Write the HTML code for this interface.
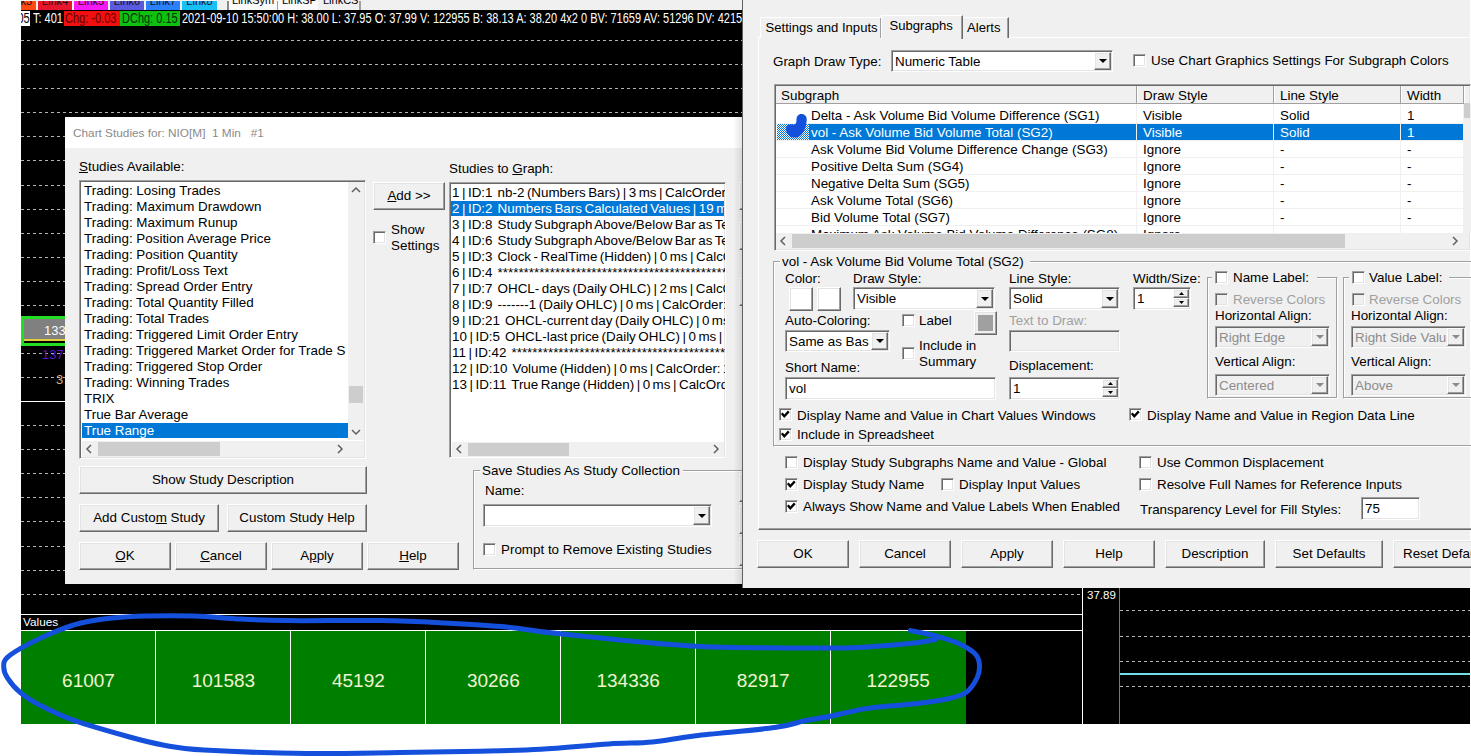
<!DOCTYPE html><html><head><meta charset="utf-8"><style>
html,body{margin:0;padding:0;width:1471px;height:756px;overflow:hidden;background:#fff;position:relative}
.t{position:absolute;white-space:pre;line-height:1;font-family:"Liberation Sans",sans-serif}
.r{position:absolute}
.sk{position:absolute;border:1px solid;border-color:#a0a0a0 #fff #fff #a0a0a0;box-shadow:inset 1px 1px 0 #696969,inset -1px -1px 0 #e3e3e3}
.bt{position:absolute;background:#f0f0f0;border:1px solid;border-color:#fff #696969 #696969 #fff;box-shadow:inset -1px -1px 0 #a0a0a0,inset 1px 1px 0 #e3e3e3}
.gb{position:absolute;border:1px solid;border-color:#a0a0a0 #fff #fff #a0a0a0;box-shadow:inset -1px -1px 0 #a0a0a0,inset 1px 1px 0 #fff}
.dash{position:absolute;height:1px;background:repeating-linear-gradient(90deg,#b4b4b4 0 3px,transparent 3px 6px)}
</style></head><body>

<div class="r" style="left:21px;top:10px;width:1449px;height:714px;background:#000;"></div>
<div class="r" style="left:21px;top:0px;width:721px;height:10px;background:#f0f0f0;"></div>
<div style="position:absolute;left:21px;top:0;width:721px;height:10px;overflow:hidden">
<div class="r" style="left:-19px;top:1px;width:34px;height:9px;background:#ff4a10;overflow:hidden"><div class="t" style="left:0;top:-5.3px;width:34px;text-align:center;font-size:11px;color:#201010">Link3</div></div>
<div class="r" style="left:17px;top:1px;width:34px;height:9px;background:#e8162c;overflow:hidden"><div class="t" style="left:0;top:-5.3px;width:34px;text-align:center;font-size:11px;color:#201010">Link4</div></div>
<div class="r" style="left:53px;top:1px;width:34px;height:9px;background:#f51af5;overflow:hidden"><div class="t" style="left:0;top:-5.3px;width:34px;text-align:center;font-size:11px;color:#201010">Link5</div></div>
<div class="r" style="left:89px;top:1px;width:34px;height:9px;background:#5a5ae0;overflow:hidden"><div class="t" style="left:0;top:-5.3px;width:34px;text-align:center;font-size:11px;color:#201010">Link6</div></div>
<div class="r" style="left:125px;top:1px;width:34px;height:9px;background:#2a80ff;overflow:hidden"><div class="t" style="left:0;top:-5.3px;width:34px;text-align:center;font-size:11px;color:#201010">Link7</div></div>
<div class="r" style="left:161px;top:1px;width:35px;height:9px;background:#18c0f5;overflow:hidden"><div class="t" style="left:0;top:-5.3px;width:35px;text-align:center;font-size:11px;color:#201010">Link8</div></div>
<div class="r" style="left:207px;top:0px;width:50px;height:10px;background:#fafafa"></div>
<div class="r" style="left:257px;top:0px;width:40px;height:10px;background:#fafafa"></div>
<div class="r" style="left:206px;top:1px;width:2px;height:9px;background:#8a8a8a"></div>
<div class="r" style="left:256px;top:1px;width:1px;height:9px;background:#a0a0a0"></div>
<div class="r" style="left:338px;top:1px;width:2px;height:9px;background:#a0a0a0"></div>
<div class="t" style="left:211px;top:-5.3px;font-size:11px;color:#000">LinkSym</div>
<div class="t" style="left:261px;top:-5.3px;font-size:11px;color:#000">LinkSP</div>
<div class="t" style="left:302px;top:-5.3px;font-size:11px;color:#000">LinkCS</div>
</div>
<div class="r" style="left:21px;top:11px;width:9px;height:15px;background:#fff;"></div>
<div class="r" style="left:64px;top:11px;width:56px;height:15px;background:#f01010;"></div>
<div class="r" style="left:120px;top:11px;width:60px;height:15px;background:#10c010;"></div>
<div style="position:absolute;left:21px;top:11px;width:9px;height:15px;overflow:hidden"><div class="t" style="left:-3.5px;top:1.5px;font-size:11px;transform:scaleY(1.28);transform-origin:0 50%;color:#000">05</div></div>
<div class="t" style="left:33px;top:12.5px;font-size:11px;transform:scaleY(1.28);transform-origin:0 50%;color:#fff">T: 401</div>
<div class="t" style="left:65px;top:12.5px;font-size:11px;transform:scaleY(1.28);transform-origin:0 50%;color:#600">Chg: -0.03</div>
<div class="t" style="left:122px;top:12.5px;font-size:11px;transform:scaleY(1.28);transform-origin:0 50%;color:#030">DChg: 0.15</div>
<div class="t" style="left:182px;top:12.5px;font-size:11px;transform:scaleY(1.28);transform-origin:0 50%;color:#fff">2021-09-10 15:50:00 H: 38.00 L: 37.95 O: 37.99 V: 122955 B: 38.13 A: 38.20 4x2 0 BV: 71659 AV: 51296 DV: 4215</div>
<div class="dash" style="left:21px;top:40px;width:1062px"></div>
<div class="dash" style="left:21px;top:64px;width:1062px"></div>
<div class="dash" style="left:21px;top:88px;width:1062px"></div>
<div class="dash" style="left:21px;top:112px;width:1062px"></div>
<div class="dash" style="left:21px;top:136px;width:1062px"></div>
<div class="dash" style="left:21px;top:160px;width:1062px"></div>
<div class="dash" style="left:21px;top:185px;width:1062px"></div>
<div class="dash" style="left:21px;top:209px;width:1062px"></div>
<div class="dash" style="left:21px;top:233px;width:1062px"></div>
<div class="dash" style="left:21px;top:257px;width:1062px"></div>
<div class="dash" style="left:21px;top:281px;width:1062px"></div>
<div class="dash" style="left:21px;top:305px;width:1062px"></div>
<div class="dash" style="left:21px;top:353px;width:1062px"></div>
<div class="dash" style="left:21px;top:377px;width:1062px"></div>
<div class="dash" style="left:21px;top:425px;width:1062px"></div>
<div class="dash" style="left:21px;top:449px;width:1062px"></div>
<div class="dash" style="left:21px;top:473px;width:1062px"></div>
<div class="dash" style="left:21px;top:497px;width:1062px"></div>
<div class="dash" style="left:21px;top:521px;width:1062px"></div>
<div class="dash" style="left:21px;top:546px;width:1062px"></div>
<div class="dash" style="left:21px;top:570px;width:1062px"></div>
<div class="dash" style="left:21px;top:594px;width:1062px"></div>
<div class="r" style="left:21px;top:316px;width:44px;height:30px;background:#22dd22;"></div>
<div class="r" style="left:24px;top:319px;width:41px;height:21px;background:#808080;"></div>
<div class="r" style="left:24px;top:339px;width:41px;height:2px;background:#e0d040;"></div>
<div class="r" style="left:24px;top:341px;width:41px;height:2px;background:#000;"></div>
<div class="t" style="left:44px;top:324.0px;font-size:13px;color:#fff;">133</div>
<div class="t" style="left:42px;top:347.5px;font-size:13px;color:#5818d0;">137</div>
<div class="t" style="left:56px;top:372.5px;font-size:13px;color:#d8b080;">3</div>
<div class="r" style="left:21px;top:401px;width:721px;height:1px;background:#fff;"></div>
<div class="r" style="left:21px;top:614px;width:1062px;height:1px;background:#fff;"></div>
<div class="t" style="left:23px;top:617.1px;font-size:11.8px;color:#fff;">Values</div>
<div class="r" style="left:21px;top:630px;width:1062px;height:1px;background:#fff;"></div>
<div class="r" style="left:21px;top:631px;width:135px;height:93px;background:#007e00;"></div>
<div class="r" style="left:156px;top:631px;width:135px;height:93px;background:#007e00;"></div>
<div class="r" style="left:291px;top:631px;width:135px;height:93px;background:#007e00;"></div>
<div class="r" style="left:426px;top:631px;width:135px;height:93px;background:#007e00;"></div>
<div class="r" style="left:561px;top:631px;width:135px;height:93px;background:#007e00;"></div>
<div class="r" style="left:696px;top:631px;width:135px;height:93px;background:#007e00;"></div>
<div class="r" style="left:831px;top:631px;width:135px;height:93px;background:#007e00;"></div>
<div class="r" style="left:155px;top:631px;width:1px;height:93px;background:#fff;"></div>
<div class="r" style="left:290px;top:631px;width:1px;height:93px;background:#fff;"></div>
<div class="r" style="left:425px;top:631px;width:1px;height:93px;background:#fff;"></div>
<div class="r" style="left:560px;top:631px;width:1px;height:93px;background:#fff;"></div>
<div class="r" style="left:695px;top:631px;width:1px;height:93px;background:#fff;"></div>
<div class="r" style="left:830px;top:631px;width:1px;height:93px;background:#fff;"></div>
<div class="t" style="left:21.0px;top:671.3px;width:135px;text-align:center;font-size:19px;color:#f0f5d0">61007</div>
<div class="t" style="left:155.9px;top:671.3px;width:135px;text-align:center;font-size:19px;color:#f0f5d0">101583</div>
<div class="t" style="left:290.9px;top:671.3px;width:135px;text-align:center;font-size:19px;color:#f0f5d0">45192</div>
<div class="t" style="left:425.8px;top:671.3px;width:135px;text-align:center;font-size:19px;color:#f0f5d0">30266</div>
<div class="t" style="left:560.7px;top:671.3px;width:135px;text-align:center;font-size:19px;color:#f0f5d0">134336</div>
<div class="t" style="left:695.7px;top:671.3px;width:135px;text-align:center;font-size:19px;color:#f0f5d0">82917</div>
<div class="t" style="left:830.6px;top:671.3px;width:135px;text-align:center;font-size:19px;color:#f0f5d0">122955</div>
<div class="r" style="left:1082px;top:587px;width:1px;height:137px;background:#fff;"></div>
<div class="r" style="left:1119px;top:587px;width:1px;height:137px;background:#777;"></div>
<div class="t" style="left:1087px;top:589.7px;font-size:11.5px;color:#fff;">37.89</div>
<div class="dash" style="left:1120px;top:610px;width:350px"></div>
<div class="dash" style="left:1120px;top:636px;width:350px"></div>
<div class="dash" style="left:1120px;top:661px;width:350px"></div>
<div class="dash" style="left:1120px;top:686px;width:350px"></div>
<div class="r" style="left:1120px;top:673px;width:350px;height:2px;background:#70e0e8;"></div>
<div class="r" style="left:65px;top:117px;width:677px;height:467px;background:#f0f0f0;"></div>
<div class="r" style="left:65px;top:117px;width:677px;height:31px;background:#fff;"></div>
<div class="t" style="left:73px;top:127.6px;font-size:11.8px;color:#8a8a8a;">Chart Studies for: NIO[M]  1 Min   #1</div>
<div class="t" style="left:79px;top:160.3px;font-size:13.4px;color:#000;"><u>S</u>tudies Available:</div>
<div class="sk" style="left:79px;top:180px;width:285px;height:277px;background:#fff;"></div>
<div style="position:absolute;left:82px;top:182px;width:266px;height:258px;overflow:hidden">
<div class="t" style="left:2px;top:2.3px;font-size:13.4px;color:#000">Trading: Losing Trades</div>
<div class="t" style="left:2px;top:18.3px;font-size:13.4px;color:#000">Trading: Maximum Drawdown</div>
<div class="t" style="left:2px;top:34.3px;font-size:13.4px;color:#000">Trading: Maximum Runup</div>
<div class="t" style="left:2px;top:50.3px;font-size:13.4px;color:#000">Trading: Position Average Price</div>
<div class="t" style="left:2px;top:66.3px;font-size:13.4px;color:#000">Trading: Position Quantity</div>
<div class="t" style="left:2px;top:82.3px;font-size:13.4px;color:#000">Trading: Profit/Loss Text</div>
<div class="t" style="left:2px;top:98.3px;font-size:13.4px;color:#000">Trading: Spread Order Entry</div>
<div class="t" style="left:2px;top:114.3px;font-size:13.4px;color:#000">Trading: Total Quantity Filled</div>
<div class="t" style="left:2px;top:130.3px;font-size:13.4px;color:#000">Trading: Total Trades</div>
<div class="t" style="left:2px;top:146.3px;font-size:13.4px;color:#000">Trading: Triggered Limit Order Entry</div>
<div class="t" style="left:2px;top:162.3px;font-size:13.4px;color:#000">Trading: Triggered Market Order for Trade S</div>
<div class="t" style="left:2px;top:178.3px;font-size:13.4px;color:#000">Trading: Triggered Stop Order</div>
<div class="t" style="left:2px;top:194.3px;font-size:13.4px;color:#000">Trading: Winning Trades</div>
<div class="t" style="left:2px;top:210.3px;font-size:13.4px;color:#000">TRIX</div>
<div class="t" style="left:2px;top:226.3px;font-size:13.4px;color:#000">True Bar Average</div>
<div class="r" style="left:-1px;top:240.5px;width:267px;height:15.5px;background:#0078d7"></div>
<div class="t" style="left:2px;top:242.3px;font-size:13.4px;color:#fff">True Range</div>
</div>
<div class="r" style="left:348px;top:182px;width:16px;height:258px;background:#f0f0f0;"></div>
<div class="r" style="left:349px;top:386px;width:14px;height:17px;background:#cdcdcd;"></div>
<svg style="position:absolute;left:351px;top:186px" width="10" height="8"><path d="M1 6 L5 2 L9 6" stroke="#606060" stroke-width="1.5" fill="none"/></svg>
<svg style="position:absolute;left:351px;top:428px" width="10" height="8"><path d="M1 2 L5 6 L9 2" stroke="#606060" stroke-width="1.5" fill="none"/></svg>
<div class="r" style="left:82px;top:441px;width:282px;height:16px;background:#f0f0f0;"></div>
<div class="r" style="left:98px;top:442px;width:122px;height:14px;background:#cdcdcd;"></div>
<svg style="position:absolute;left:85px;top:444px" width="8" height="10"><path d="M6 1 L2 5 L6 9" stroke="#606060" stroke-width="1.5" fill="none"/></svg>
<svg style="position:absolute;left:336px;top:444px" width="8" height="10"><path d="M2 1 L6 5 L2 9" stroke="#606060" stroke-width="1.5" fill="none"/></svg>
<div class="bt" style="left:373px;top:182px;width:70px;height:26px;"></div>
<div class="t" style="left:373px;top:188.8px;width:72px;text-align:center;font-size:13.4px"><u>A</u>dd &gt;&gt;</div>
<div class="sk" style="left:373px;top:231px;width:11px;height:11px;background:#fff"></div>
<div class="t" style="left:391px;top:223.3px;font-size:13.4px;color:#000;">Show</div>
<div class="t" style="left:391px;top:239.3px;font-size:13.4px;color:#000;">Settings</div>
<div class="t" style="left:449px;top:162.3px;font-size:13.4px;color:#000;">Studies to <u>G</u>raph:</div>
<div class="sk" style="left:449px;top:182px;width:275px;height:274px;background:#fff;"></div>
<div style="position:absolute;left:451px;top:184px;width:274px;height:257px;overflow:hidden">
<div class="t" style="left:1px;top:2.3px;font-size:13.4px;color:#000;word-spacing:-1.2px">1 | ID:1  nb-2 (Numbers Bars) | 3 ms | CalcOrder: 1</div>
<div class="r" style="left:-1px;top:16.5px;width:274px;height:15.5px;background:#0078d7"></div>
<div class="t" style="left:1px;top:18.3px;font-size:13.4px;color:#fff;word-spacing:-1.2px">2 | ID:2  Numbers Bars Calculated Values | 19 ms | CalcOrder</div>
<div class="t" style="left:1px;top:34.3px;font-size:13.4px;color:#000;word-spacing:-1.2px">3 | ID:8  Study Subgraph Above/Below Bar as Text</div>
<div class="t" style="left:1px;top:50.3px;font-size:13.4px;color:#000;word-spacing:-1.2px">4 | ID:6  Study Subgraph Above/Below Bar as Text</div>
<div class="t" style="left:1px;top:66.3px;font-size:13.4px;color:#000;word-spacing:-1.2px">5 | ID:3  Clock - RealTime (Hidden) | 0 ms | CalcOrder</div>
<div class="t" style="left:1px;top:82.3px;font-size:13.4px;color:#000;word-spacing:-1.2px">6 | ID:4  ************************************************************</div>
<div class="t" style="left:1px;top:98.3px;font-size:13.4px;color:#000;word-spacing:-1.2px">7 | ID:7  OHCL- days (Daily OHLC) | 2 ms | CalcOrder</div>
<div class="t" style="left:1px;top:114.3px;font-size:13.4px;color:#000;word-spacing:-1.2px">8 | ID:9  -------1 (Daily OHLC) | 0 ms | CalcOrder: 8</div>
<div class="t" style="left:1px;top:130.3px;font-size:13.4px;color:#000;word-spacing:-1.2px">9 | ID:21  OHCL-current day (Daily OHLC) | 0 ms | Calc</div>
<div class="t" style="left:1px;top:146.3px;font-size:13.4px;color:#000;word-spacing:-1.2px">10 | ID:5  OHCL-last price (Daily OHLC) | 0 ms | Calc</div>
<div class="t" style="left:1px;top:162.3px;font-size:13.4px;color:#000;word-spacing:-1.2px">11 | ID:42  ************************************************************</div>
<div class="t" style="left:1px;top:178.3px;font-size:13.4px;color:#000;word-spacing:-1.2px">12 | ID:10  Volume (Hidden) | 0 ms | CalcOrder: 12</div>
<div class="t" style="left:1px;top:194.3px;font-size:13.4px;color:#000;word-spacing:-1.2px">13 | ID:11  True Range (Hidden) | 0 ms | CalcOrder: 13</div>
</div>
<div class="r" style="left:452px;top:442px;width:272px;height:15px;background:#f0f0f0;"></div>
<div class="r" style="left:468px;top:443px;width:101px;height:13px;background:#cdcdcd;"></div>
<svg style="position:absolute;left:455px;top:444px" width="8" height="10"><path d="M6 1 L2 5 L6 9" stroke="#606060" stroke-width="1.5" fill="none"/></svg>
<svg style="position:absolute;left:712px;top:444px" width="8" height="10"><path d="M2 1 L6 5 L2 9" stroke="#606060" stroke-width="1.5" fill="none"/></svg>
<div class="bt" style="left:79px;top:466px;width:286px;height:26px;"></div>
<div class="t" style="left:79px;top:472.8px;width:288px;text-align:center;font-size:13.4px">Show Study Description</div>
<div class="bt" style="left:79px;top:504px;width:138px;height:26px;"></div>
<div class="t" style="left:79px;top:510.8px;width:140px;text-align:center;font-size:13.4px">Add Custo<u>m</u> Study</div>
<div class="bt" style="left:227px;top:504px;width:138px;height:26px;"></div>
<div class="t" style="left:227px;top:510.8px;width:140px;text-align:center;font-size:13.4px">Custom Study Help</div>
<div class="bt" style="left:79px;top:542px;width:90px;height:26px;"></div>
<div class="t" style="left:79px;top:548.8px;width:92px;text-align:center;font-size:13.4px"><u>O</u>K</div>
<div class="bt" style="left:175px;top:542px;width:90px;height:26px;"></div>
<div class="t" style="left:175px;top:548.8px;width:92px;text-align:center;font-size:13.4px"><u>C</u>ancel</div>
<div class="bt" style="left:271px;top:542px;width:90px;height:26px;"></div>
<div class="t" style="left:271px;top:548.8px;width:92px;text-align:center;font-size:13.4px">A<u>p</u>ply</div>
<div class="bt" style="left:367px;top:542px;width:90px;height:26px;"></div>
<div class="t" style="left:367px;top:548.8px;width:92px;text-align:center;font-size:13.4px"><u>H</u>elp</div>
<div class="gb" style="left:473px;top:470px;width:278px;height:98px"></div>
<div class="r" style="left:480px;top:462px;width:203px;height:14px;background:#f0f0f0;"></div>
<div class="t" style="left:482px;top:463.8px;font-size:13.4px;color:#000;">Save Studies As Study Collection</div>
<div class="t" style="left:485px;top:483.8px;font-size:13.4px;color:#000;">Name:</div>
<div class="sk" style="left:483px;top:504px;width:227px;height:21px;background:#fff;"></div>
<div class="bt" style="left:693px;top:506px;width:15px;height:17px"></div>
<svg style="position:absolute;left:697.5px;top:513.5px" width="8" height="5"><path d="M0 0 L8 0 L4 4 Z" fill="#000"/></svg>
<div class="sk" style="left:483px;top:543px;width:11px;height:11px;background:#fff"></div>
<div class="t" style="left:501px;top:543.3px;font-size:13.4px;color:#000;">Prompt to Remove Existing Studies</div>
<div class="bt" style="left:739px;top:182px;width:18px;height:26px;"></div>
<div class="bt" style="left:739px;top:222px;width:18px;height:26px;"></div>
<div class="bt" style="left:739px;top:278px;width:18px;height:26px;"></div>
<div class="bt" style="left:739px;top:474px;width:18px;height:26px;"></div>
<div class="bt" style="left:739px;top:506px;width:18px;height:26px;"></div>
<div class="bt" style="left:739px;top:538px;width:18px;height:26px;"></div>
<div class="r" style="left:733px;top:117px;width:9px;height:467px;background:linear-gradient(90deg,rgba(0,0,0,0),rgba(0,0,0,0.10));"></div>
<div class="r" style="left:742px;top:0px;width:728px;height:588px;background:#f0f0f0;border-left:1px solid #606060;box-sizing:border-box"></div>
<div class="r" style="left:758px;top:37px;width:720px;height:493px;border:1px solid;border-color:#fff #696969 #696969 #fff;box-sizing:border-box;box-shadow:inset -1px -1px 0 #a0a0a0"></div>
<div class="r" style="left:760px;top:17px;width:122px;height:21px;background:#f0f0f0;border:1px solid;border-color:#fff #696969 transparent #fff;border-bottom:none;box-sizing:border-box;box-shadow:inset -1px 0 0 #a0a0a0"></div>
<div class="t" style="left:765.5px;top:20.7px;font-size:13.1px;color:#000;">Settings and Inputs</div>
<div class="r" style="left:962px;top:17px;width:47px;height:21px;background:#f0f0f0;border:1px solid;border-color:#fff #696969 transparent #fff;border-bottom:none;box-sizing:border-box;box-shadow:inset -1px 0 0 #a0a0a0"></div>
<div class="t" style="left:967px;top:20.7px;font-size:13.1px;color:#000;">Alerts</div>
<div class="r" style="left:881px;top:15px;width:82px;height:24px;background:#f0f0f0;border:1px solid;border-color:#fff #696969 transparent #fff;border-bottom:none;box-sizing:border-box;box-shadow:inset -1px 0 0 #a0a0a0"></div>
<div class="t" style="left:889.5px;top:18.8px;font-size:13.1px;color:#000;">Subgraphs</div>
<div class="t" style="left:773px;top:55.3px;font-size:13.4px;color:#000;">Graph Draw Type:</div>
<div class="sk" style="left:891px;top:50px;width:220px;height:20px;background:#fff;"></div>
<div class="bt" style="left:1094px;top:52px;width:15px;height:16px"></div>
<svg style="position:absolute;left:1098.5px;top:59.0px" width="8" height="5"><path d="M0 0 L8 0 L4 4 Z" fill="#000"/></svg>
<div class="t" style="left:895px;top:54.8px;font-size:13.4px;color:#000;">Numeric Table</div>
<div class="sk" style="left:1133px;top:54px;width:11px;height:11px;background:#fff"></div>
<div class="t" style="left:1151px;top:53.8px;font-size:13.4px;color:#000;">Use Chart Graphics Settings For Subgraph Colors</div>
<div class="sk" style="left:774px;top:84px;width:695px;height:165px;background:#fff;"></div>
<div class="r" style="left:776px;top:86px;width:693px;height:18px;background:#f0f0f0;"></div>
<div class="r" style="left:1136px;top:86px;width:1px;height:18px;background:#a0a0a0;"></div>
<div class="r" style="left:1137px;top:86px;width:1px;height:18px;background:#fff;"></div>
<div class="r" style="left:1273px;top:86px;width:1px;height:18px;background:#a0a0a0;"></div>
<div class="r" style="left:1274px;top:86px;width:1px;height:18px;background:#fff;"></div>
<div class="r" style="left:1400px;top:86px;width:1px;height:18px;background:#a0a0a0;"></div>
<div class="r" style="left:1401px;top:86px;width:1px;height:18px;background:#fff;"></div>
<div class="r" style="left:1463px;top:86px;width:1px;height:18px;background:#a0a0a0;"></div>
<div class="r" style="left:1464px;top:86px;width:1px;height:18px;background:#fff;"></div>
<div class="r" style="left:776px;top:103px;width:693px;height:1px;background:#a0a0a0;"></div>
<div class="t" style="left:781px;top:88.8px;font-size:13.4px;color:#000;">Subgraph</div>
<div class="t" style="left:1143px;top:88.8px;font-size:13.4px;color:#000;">Draw Style</div>
<div class="t" style="left:1280px;top:88.8px;font-size:13.4px;color:#000;">Line Style</div>
<div class="t" style="left:1407px;top:88.8px;font-size:13.4px;color:#000;">Width</div>
<div style="position:absolute;left:776px;top:104px;width:687px;height:129px;overflow:hidden">
<div class="r" style="left:0;top:19px;width:687px;height:1px;background:#f0f0f0"></div>
<div class="t" style="left:35px;top:5.3px;font-size:13.4px;color:#000">Delta - Ask Volume Bid Volume Difference (SG1)</div>
<div class="t" style="left:367px;top:5.3px;font-size:13.4px;color:#000">Visible</div>
<div class="t" style="left:504px;top:5.3px;font-size:13.4px;color:#000">Solid</div>
<div class="t" style="left:631px;top:5.3px;font-size:13.4px;color:#000">1</div>
<div class="r" style="left:33px;top:20px;width:660px;height:16px;background:#0078d7"></div>
<div class="r" style="left:1px;top:20px;width:32px;height:16px;background:repeating-conic-gradient(#0078d7 0 25%,#fff 0 50%) 0 0/2px 2px"></div>
<div class="r" style="left:0;top:36px;width:687px;height:1px;background:#f0f0f0"></div>
<div class="t" style="left:35px;top:22.3px;font-size:13.4px;color:#fff">vol - Ask Volume Bid Volume Total (SG2)</div>
<div class="t" style="left:367px;top:22.3px;font-size:13.4px;color:#fff">Visible</div>
<div class="t" style="left:504px;top:22.3px;font-size:13.4px;color:#fff">Solid</div>
<div class="t" style="left:631px;top:22.3px;font-size:13.4px;color:#fff">1</div>
<div class="r" style="left:0;top:53px;width:687px;height:1px;background:#f0f0f0"></div>
<div class="t" style="left:35px;top:39.3px;font-size:13.4px;color:#000">Ask Volume Bid Volume Difference Change (SG3)</div>
<div class="t" style="left:367px;top:39.3px;font-size:13.4px;color:#000">Ignore</div>
<div class="t" style="left:504px;top:39.3px;font-size:13.4px;color:#000">-</div>
<div class="t" style="left:631px;top:39.3px;font-size:13.4px;color:#000">-</div>
<div class="r" style="left:0;top:70px;width:687px;height:1px;background:#f0f0f0"></div>
<div class="t" style="left:35px;top:56.3px;font-size:13.4px;color:#000">Positive Delta Sum (SG4)</div>
<div class="t" style="left:367px;top:56.3px;font-size:13.4px;color:#000">Ignore</div>
<div class="t" style="left:504px;top:56.3px;font-size:13.4px;color:#000">-</div>
<div class="t" style="left:631px;top:56.3px;font-size:13.4px;color:#000">-</div>
<div class="r" style="left:0;top:87px;width:687px;height:1px;background:#f0f0f0"></div>
<div class="t" style="left:35px;top:73.3px;font-size:13.4px;color:#000">Negative Delta Sum (SG5)</div>
<div class="t" style="left:367px;top:73.3px;font-size:13.4px;color:#000">Ignore</div>
<div class="t" style="left:504px;top:73.3px;font-size:13.4px;color:#000">-</div>
<div class="t" style="left:631px;top:73.3px;font-size:13.4px;color:#000">-</div>
<div class="r" style="left:0;top:104px;width:687px;height:1px;background:#f0f0f0"></div>
<div class="t" style="left:35px;top:90.3px;font-size:13.4px;color:#000">Ask Volume Total (SG6)</div>
<div class="t" style="left:367px;top:90.3px;font-size:13.4px;color:#000">Ignore</div>
<div class="t" style="left:504px;top:90.3px;font-size:13.4px;color:#000">-</div>
<div class="t" style="left:631px;top:90.3px;font-size:13.4px;color:#000">-</div>
<div class="r" style="left:0;top:121px;width:687px;height:1px;background:#f0f0f0"></div>
<div class="t" style="left:35px;top:107.3px;font-size:13.4px;color:#000">Bid Volume Total (SG7)</div>
<div class="t" style="left:367px;top:107.3px;font-size:13.4px;color:#000">Ignore</div>
<div class="t" style="left:504px;top:107.3px;font-size:13.4px;color:#000">-</div>
<div class="t" style="left:631px;top:107.3px;font-size:13.4px;color:#000">-</div>
<div class="r" style="left:0;top:138px;width:687px;height:1px;background:#f0f0f0"></div>
<div class="t" style="left:35px;top:124.3px;font-size:13.4px;color:#000">Maximum Ask Volume Bid Volume Difference (SG8)</div>
<div class="t" style="left:367px;top:124.3px;font-size:13.4px;color:#000">Ignore</div>
<div class="t" style="left:504px;top:124.3px;font-size:13.4px;color:#000">-</div>
<div class="t" style="left:631px;top:124.3px;font-size:13.4px;color:#000">-</div>
<div class="r" style="left:360px;top:0;width:1px;height:129px;background:#f0f0f0"></div>
<div class="r" style="left:497px;top:0;width:1px;height:129px;background:#f0f0f0"></div>
<div class="r" style="left:624px;top:0;width:1px;height:129px;background:#f0f0f0"></div>
</div>
<div class="r" style="left:1463px;top:104px;width:8px;height:129px;background:#f0f0f0;"></div>
<div class="r" style="left:1464px;top:103px;width:6px;height:15px;background:#cdcdcd;"></div>
<div class="r" style="left:776px;top:233px;width:693px;height:16px;background:#f0f0f0;"></div>
<div class="r" style="left:792px;top:234px;width:553px;height:14px;background:#cdcdcd;"></div>
<svg style="position:absolute;left:779px;top:236px" width="8" height="10"><path d="M6 1 L2 5 L6 9" stroke="#606060" stroke-width="1.5" fill="none"/></svg>
<svg style="position:absolute;left:1451px;top:236px" width="8" height="10"><path d="M2 1 L6 5 L2 9" stroke="#606060" stroke-width="1.5" fill="none"/></svg>
<div class="gb" style="left:773px;top:261px;width:699px;height:184px"></div>
<div class="r" style="left:780px;top:254px;width:250px;height:14px;background:#f0f0f0;"></div>
<div class="t" style="left:782px;top:254.8px;font-size:13.4px;color:#000;">vol - Ask Volume Bid Volume Total (SG2)</div>
<div class="t" style="left:785px;top:271.8px;font-size:13.4px;color:#000;">Color:</div>
<div class="bt" style="left:789px;top:287px;width:22px;height:22px;background:#fff"></div>
<div class="bt" style="left:817px;top:287px;width:22px;height:22px;background:#fff"></div>
<div class="t" style="left:853px;top:271.8px;font-size:13.4px;color:#000;">Draw Style:</div>
<div class="sk" style="left:853px;top:287px;width:140px;height:21px;background:#fff;"></div>
<div class="bt" style="left:976px;top:289px;width:15px;height:17px"></div>
<svg style="position:absolute;left:980.5px;top:296.5px" width="8" height="5"><path d="M0 0 L8 0 L4 4 Z" fill="#000"/></svg>
<div class="t" style="left:857px;top:292.3px;font-size:13.4px;color:#000;">Visible</div>
<div class="t" style="left:1009px;top:271.8px;font-size:13.4px;color:#000;">Line Style:</div>
<div class="sk" style="left:1009px;top:287px;width:109px;height:21px;background:#fff;"></div>
<div class="bt" style="left:1101px;top:289px;width:15px;height:17px"></div>
<svg style="position:absolute;left:1105.5px;top:296.5px" width="8" height="5"><path d="M0 0 L8 0 L4 4 Z" fill="#000"/></svg>
<div class="t" style="left:1013px;top:292.3px;font-size:13.4px;color:#000;">Solid</div>
<div class="t" style="left:1133px;top:271.8px;font-size:13.4px;color:#000;">Width/Size:</div>
<div class="sk" style="left:1133px;top:287px;width:56px;height:21px;background:#fff;"></div>
<div class="t" style="left:1137px;top:292.3px;font-size:13.4px;color:#000;">1</div>
<div class="bt" style="left:1173px;top:289px;width:14px;height:7px"></div>
<div class="bt" style="left:1173px;top:298px;width:14px;height:7px"></div>
<svg style="position:absolute;left:1179.0px;top:292.0px" width="5" height="3"><path d="M0 3 L5 3 L2.5 0Z" fill="#000"/></svg>
<svg style="position:absolute;left:1179.0px;top:301.0px" width="5" height="3"><path d="M0 0 L5 0 L2.5 3Z" fill="#000"/></svg>
<div class="t" style="left:785px;top:313.8px;font-size:13.4px;color:#000;">Auto-Coloring:</div>
<div class="sk" style="left:785px;top:330px;width:103px;height:20px;background:#fff;"></div>
<div class="bt" style="left:871px;top:332px;width:15px;height:16px"></div>
<svg style="position:absolute;left:875.5px;top:339.0px" width="8" height="5"><path d="M0 0 L8 0 L4 4 Z" fill="#000"/></svg>
<div class="t" style="left:789px;top:334.8px;font-size:13.4px;color:#000;">Same as Bas</div>
<div class="sk" style="left:902px;top:314px;width:11px;height:11px;background:#fff"></div>
<div class="t" style="left:919px;top:313.8px;font-size:13.4px;color:#000;">Label</div>
<div class="bt" style="left:974px;top:311px;width:21px;height:22px;"></div>
<div class="r" style="left:978px;top:315px;width:15px;height:16px;background:#a0a0a0;"></div>
<div class="sk" style="left:902px;top:347px;width:11px;height:11px;background:#fff"></div>
<div class="t" style="left:919px;top:338.8px;font-size:13.4px;color:#000;">Include in</div>
<div class="t" style="left:919px;top:355.3px;font-size:13.4px;color:#000;">Summary</div>
<div class="t" style="left:1009px;top:313.8px;font-size:13.4px;color:#a0a0a0;">Text to Draw:</div>
<div class="sk" style="left:1009px;top:330px;width:109px;height:20px;background:#f0f0f0;"></div>
<div class="t" style="left:785px;top:361.3px;font-size:13.4px;color:#000;">Short Name:</div>
<div class="sk" style="left:785px;top:377px;width:209px;height:21px;background:#fff;"></div>
<div class="t" style="left:789px;top:382.3px;font-size:13.4px;color:#000;">vol</div>
<div class="t" style="left:1009px;top:359.3px;font-size:13.4px;color:#000;">Displacement:</div>
<div class="sk" style="left:1009px;top:377px;width:109px;height:21px;background:#fff;"></div>
<div class="t" style="left:1013px;top:382.3px;font-size:13.4px;color:#000;">1</div>
<div class="bt" style="left:1102px;top:379px;width:14px;height:7px"></div>
<div class="bt" style="left:1102px;top:388px;width:14px;height:7px"></div>
<svg style="position:absolute;left:1108.0px;top:382.0px" width="5" height="3"><path d="M0 3 L5 3 L2.5 0Z" fill="#000"/></svg>
<svg style="position:absolute;left:1108.0px;top:391.0px" width="5" height="3"><path d="M0 0 L5 0 L2.5 3Z" fill="#000"/></svg>
<div class="sk" style="left:779px;top:408px;width:11px;height:11px;background:#fff"></div>
<svg style="position:absolute;left:779px;top:408px" width="13" height="13"><path d="M2.8 5.2 L5.3 8.3 L9.8 3.4" stroke="#000" stroke-width="2.3" fill="none"/></svg>
<div class="t" style="left:797px;top:408.8px;font-size:13.4px;color:#000;">Display Name and Value in Chart Values Windows</div>
<div class="sk" style="left:779px;top:428px;width:11px;height:11px;background:#fff"></div>
<svg style="position:absolute;left:779px;top:428px" width="13" height="13"><path d="M2.8 5.2 L5.3 8.3 L9.8 3.4" stroke="#000" stroke-width="2.3" fill="none"/></svg>
<div class="t" style="left:797px;top:427.8px;font-size:13.4px;color:#000;">Include in Spreadsheet</div>
<div class="sk" style="left:1129px;top:408px;width:11px;height:11px;background:#fff"></div>
<svg style="position:absolute;left:1129px;top:408px" width="13" height="13"><path d="M2.8 5.2 L5.3 8.3 L9.8 3.4" stroke="#000" stroke-width="2.3" fill="none"/></svg>
<div class="t" style="left:1147px;top:408.8px;font-size:13.4px;color:#000;">Display Name and Value in Region Data Line</div>
<div class="gb" style="left:1207px;top:277px;width:129px;height:120px"></div>
<div class="r" style="left:1212px;top:268px;width:105px;height:15px;background:#f0f0f0;"></div>
<div class="sk" style="left:1215px;top:271px;width:11px;height:11px;background:#fff"></div>
<div class="t" style="left:1233px;top:271.3px;font-size:13.4px;color:#000;">Name Label:</div>
<div class="sk" style="left:1215px;top:293px;width:11px;height:11px;background:#f0f0f0"></div>
<div class="t" style="left:1233px;top:292.8px;font-size:13.4px;color:#a0a0a0;">Reverse Colors</div>
<div class="t" style="left:1215px;top:309.3px;font-size:13.4px;color:#000;">Horizontal Align:</div>
<div class="sk" style="left:1215px;top:326px;width:113px;height:20px;background:#f0f0f0;"></div>
<div class="bt" style="left:1311px;top:328px;width:15px;height:16px"></div>
<svg style="position:absolute;left:1315.5px;top:335.0px" width="8" height="5"><path d="M0 0 L8 0 L4 4 Z" fill="#8c8c8c"/></svg>
<div class="t" style="left:1219px;top:330.8px;font-size:13.4px;color:#8c8c8c;">Right Edge</div>
<div class="t" style="left:1215px;top:355.3px;font-size:13.4px;color:#000;">Vertical Align:</div>
<div class="sk" style="left:1215px;top:374px;width:113px;height:20px;background:#f0f0f0;"></div>
<div class="bt" style="left:1311px;top:376px;width:15px;height:16px"></div>
<svg style="position:absolute;left:1315.5px;top:383.0px" width="8" height="5"><path d="M0 0 L8 0 L4 4 Z" fill="#8c8c8c"/></svg>
<div class="t" style="left:1219px;top:378.8px;font-size:13.4px;color:#8c8c8c;">Centered</div>
<div class="gb" style="left:1343px;top:277px;width:128px;height:120px"></div>
<div class="r" style="left:1349px;top:268px;width:100px;height:15px;background:#f0f0f0;"></div>
<div class="sk" style="left:1352px;top:271px;width:11px;height:11px;background:#fff"></div>
<div class="t" style="left:1369px;top:271.3px;font-size:13.4px;color:#000;">Value Label:</div>
<div class="sk" style="left:1352px;top:293px;width:11px;height:11px;background:#f0f0f0"></div>
<div class="t" style="left:1369px;top:292.8px;font-size:13.4px;color:#a0a0a0;">Reverse Colors</div>
<div class="t" style="left:1351px;top:309.3px;font-size:13.4px;color:#000;">Horizontal Align:</div>
<div class="sk" style="left:1351px;top:326px;width:113px;height:20px;background:#f0f0f0;"></div>
<div class="bt" style="left:1447px;top:328px;width:15px;height:16px"></div>
<svg style="position:absolute;left:1451.5px;top:335.0px" width="8" height="5"><path d="M0 0 L8 0 L4 4 Z" fill="#8c8c8c"/></svg>
<div class="t" style="left:1355px;top:330.8px;font-size:13.4px;color:#8c8c8c;">Right Side Valu</div>
<div class="t" style="left:1351px;top:355.3px;font-size:13.4px;color:#000;">Vertical Align:</div>
<div class="sk" style="left:1351px;top:374px;width:113px;height:20px;background:#f0f0f0;"></div>
<div class="bt" style="left:1447px;top:376px;width:15px;height:16px"></div>
<svg style="position:absolute;left:1451.5px;top:383.0px" width="8" height="5"><path d="M0 0 L8 0 L4 4 Z" fill="#8c8c8c"/></svg>
<div class="t" style="left:1355px;top:378.8px;font-size:13.4px;color:#8c8c8c;">Above</div>
<div class="sk" style="left:785px;top:456px;width:11px;height:11px;background:#fff"></div>
<div class="t" style="left:803px;top:456.3px;font-size:13.4px;color:#000;">Display Study Subgraphs Name and Value - Global</div>
<div class="sk" style="left:785px;top:478px;width:11px;height:11px;background:#fff"></div>
<svg style="position:absolute;left:785px;top:478px" width="13" height="13"><path d="M2.8 5.2 L5.3 8.3 L9.8 3.4" stroke="#000" stroke-width="2.3" fill="none"/></svg>
<div class="t" style="left:803px;top:478.3px;font-size:13.4px;color:#000;">Display Study Name</div>
<div class="sk" style="left:941px;top:478px;width:11px;height:11px;background:#fff"></div>
<div class="t" style="left:959px;top:478.3px;font-size:13.4px;color:#000;">Display Input Values</div>
<div class="sk" style="left:785px;top:500px;width:11px;height:11px;background:#fff"></div>
<svg style="position:absolute;left:785px;top:500px" width="13" height="13"><path d="M2.8 5.2 L5.3 8.3 L9.8 3.4" stroke="#000" stroke-width="2.3" fill="none"/></svg>
<div class="t" style="left:803px;top:500.3px;font-size:13.4px;color:#000;">Always Show Name and Value Labels When Enabled</div>
<div class="sk" style="left:1139px;top:456px;width:11px;height:11px;background:#fff"></div>
<div class="t" style="left:1157px;top:456.3px;font-size:13.4px;color:#000;">Use Common Displacement</div>
<div class="sk" style="left:1139px;top:478px;width:11px;height:11px;background:#fff"></div>
<div class="t" style="left:1157px;top:478.3px;font-size:13.4px;color:#000;">Resolve Full Names for Reference Inputs</div>
<div class="t" style="left:1140px;top:502.8px;font-size:13.4px;color:#000;">Transparency Level for Fill Styles:</div>
<div class="sk" style="left:1361px;top:497px;width:57px;height:21px;background:#fff;"></div>
<div class="t" style="left:1365px;top:502.3px;font-size:13.4px;color:#000;">75</div>
<div class="bt" style="left:757px;top:540px;width:90px;height:26px;"></div>
<div class="t" style="left:757px;top:546.8px;width:92px;text-align:center;font-size:13.4px">OK</div>
<div class="bt" style="left:859px;top:540px;width:90px;height:26px;"></div>
<div class="t" style="left:859px;top:546.8px;width:92px;text-align:center;font-size:13.4px">Cancel</div>
<div class="bt" style="left:961px;top:540px;width:90px;height:26px;"></div>
<div class="t" style="left:961px;top:546.8px;width:92px;text-align:center;font-size:13.4px">Apply</div>
<div class="bt" style="left:1063px;top:540px;width:90px;height:26px;"></div>
<div class="t" style="left:1063px;top:546.8px;width:92px;text-align:center;font-size:13.4px">Help</div>
<div class="bt" style="left:1165px;top:540px;width:98px;height:26px;"></div>
<div class="t" style="left:1165px;top:546.8px;width:100px;text-align:center;font-size:13.4px">Description</div>
<div class="bt" style="left:1275px;top:540px;width:106px;height:26px;"></div>
<div class="t" style="left:1275px;top:546.8px;width:108px;text-align:center;font-size:13.4px">Set Defaults</div>
<div class="bt" style="left:1393px;top:540px;width:106px;height:26px;"></div>
<div class="t" style="left:1403px;top:546.8px;font-size:13.4px;color:#000;">Reset Defaults</div>
<svg style="position:absolute;left:0;top:0" width="1471" height="756">
<path d="M 910.5 630.6 C 914.4 631.4, 925.8 633.2, 934 635.4 C 942.2 637.6, 952.8 640.8, 959.7 644 C 966.6 647.2, 972.3 650.8, 975.6 654.4 C 978.9 658.0, 979.3 661.6, 979.5 665.5 C 979.7 669.4, 979.2 673.5, 977 678 C 974.8 682.5, 971.0 689.0, 966 692.5 C 961.0 696.0, 955.5 697.1, 947 699 C 938.5 700.9, 928.2 702.1, 915 703.7 C 901.8 705.3, 881.7 706.3, 867.6 708.4 C 853.5 710.5, 840.9 714.1, 830.4 716.2 C 819.9 718.3, 813.9 718.9, 804.6 720.8 C 795.3 722.7, 792.7 725.1, 774.6 727.6 C 756.5 730.1, 716.2 733.3, 695.8 735.7 C 675.4 738.1, 666.8 740.6, 652.3 742 C 637.8 743.4, 627.4 742.7, 608.8 743.9 C 590.2 745.1, 562.3 748.1, 540.8 749.3 C 519.3 750.5, 503.5 750.7, 480 751.2 C 456.5 751.7, 429.0 752.1, 400 752.5 C 371.0 752.9, 338.7 753.9, 306 753.5 C 273.3 753.1, 227.8 751.4, 204 750 C 180.2 748.6, 175.4 747.2, 163 745 C 150.6 742.8, 144.4 741.1, 129.6 737 C 114.8 732.9, 88.8 725.6, 74 720.4 C 59.2 715.2, 49.6 710.2, 40.7 705.6 C 31.8 701.0, 25.9 697.2, 20.4 692.6 C 14.8 688.0, 10.2 682.1, 7.4 677.8 C 4.6 673.5, 3.7 670.1, 3.7 666.7 C 3.7 663.3, 3.4 661.1, 7.4 657.4 C 11.4 653.7, 19.8 648.7, 27.8 644.4 C 35.8 640.1, 46.8 635.0, 55.5 631.5 C 64.2 628.0, 70.9 625.4, 80 623.2 C 89.1 621.0, 98.8 619.5, 110 618.3 C 121.2 617.1, 133.0 616.4, 147 616 C 161.0 615.6, 178.2 615.5, 193.8 616 C 209.4 616.5, 225.1 618.2, 240.7 619 C 256.3 619.8, 264.2 620.3, 287.6 620.6 C 311.1 620.9, 355.3 620.2, 381.4 620.6 C 407.5 621.0, 423.1 621.9, 444 623 C 464.9 624.1, 487.2 625.2, 506.5 627 C 525.8 628.8, 529.3 630.6, 560 633.8 C 590.7 636.9, 645.7 643.5, 690.7 645.9 C 735.7 648.3, 797.9 648.0, 830 648 C 862.1 648.0, 868.8 646.6, 883.5 645.7 C 898.2 644.8, 909.2 643.5, 918 642.5 C 926.8 641.5, 933.0 639.9, 936 639.4" stroke="#1450dc" stroke-width="5" fill="none" stroke-linecap="round" stroke-linejoin="round"/>
<path d="M 786 129 C 786 125, 790 123.5, 793 124.5 C 795 125, 796 124, 796.5 121 C 796 116, 799 113.5, 802 114 C 806 114.5, 807.5 118, 806.5 122 C 806 126, 805 131, 801 135 C 798 138, 793 138.5, 789.5 136 C 787 134, 786 131.5, 786 129 Z" fill="#1450dc"/>
</svg>
</body></html>
